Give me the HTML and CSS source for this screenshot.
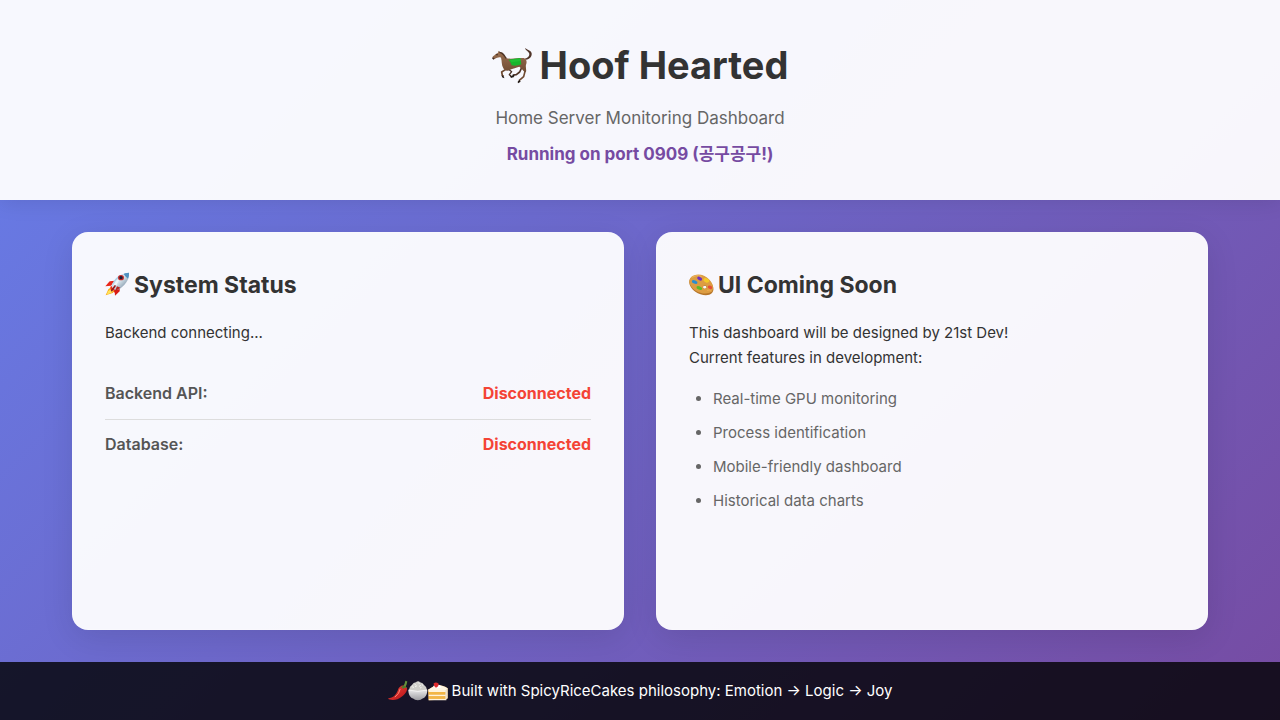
FILE: index.html
```html
<!DOCTYPE html>
<html lang="en">
<head>
<meta charset="utf-8">
<meta name="viewport" content="width=device-width, initial-scale=1">
<title>Hoof Hearted</title>
<link rel="stylesheet" href="styles.css">
</head>
<body>
<div class="app">
  <header class="header">
    <h1 class="title">
      <svg class="icon-title" viewBox="16 6 126 126" aria-hidden="true">
        <defs>
          <linearGradient id="coat" x1="0" y1="0" x2="0" y2="1"><stop offset="0" stop-color="#9c7152"/><stop offset="1" stop-color="#6f4c33"/></linearGradient>
        </defs>
        <path d="M117 53C130 53 136 43 135 34C133 25 125 25 115 18C117 27 129 29 128 37C128 43 123 48 114 50Z" fill="#50352a"/>
        <path d="M61 80L45 90L47 100L51 103" fill="none" stroke="#6d4930" stroke-width="5" stroke-linejoin="round"/>
        <path d="M66 82L75 89L68 98L75 104" fill="none" stroke="#493025" stroke-width="4" stroke-linejoin="round"/>
        <path d="M105 77L99 90L89 98L80 99" fill="none" stroke="#4e3325" stroke-width="5" stroke-linejoin="round"/>
        <path d="M108 72L115 88L111 104L97 116" fill="none" stroke="#704b31" stroke-width="5" stroke-linejoin="round"/>
        <path d="M36 27L39 30C48 31 52 42 59 49C73 52 94 48 111 48C121 51 121 61 118 68C116 76 121 86 117 91C109 87 106 79 98 74C87 77 80 80 74 82C64 88 55 88 50 79C44 69 46 57 43 47C38 44 31 47 24 51C18 54 16 48 19 43C24 39 29 34 34 32Z" fill="url(#coat)"/>
        <path d="M35 26L40 30C49 29 55 40 61 49L57 50C51 42 46 35 39 33Z" fill="#4d3425"/>
        <path d="M66 53Q84 50 101 48L104 67Q90 73 75 70Q72 60 66 53Z" fill="#18b52d"/>
        <path d="M68 54L101 50L102 57L75 61Z" fill="#24c83a" opacity=".6"/>
        <path d="M45 99L52 104L53 109L46 106ZM71 100L78 104L76 108L71 106ZM79 96L84 101L79 107L76 103ZM98 113L102 119L94 124L93 119Z" fill="#201914"/>
        <circle cx="31" cy="38" r="2" fill="#16110e"/>
        <path d="M18 46L23 49L21 53L17 50Z" fill="#3e2b24"/>
      </svg>
      Hoof Hearted
    </h1>
    <p class="subtitle">Home Server Monitoring Dashboard</p>
    <p class="port">Running on port 0909 (공구공구!)</p>
  </header>

  <main class="main">
    <section class="card">
      <h2 class="card-title">
        <svg class="icon-card" viewBox="14 8 75 78" aria-hidden="true">
          <defs>
            <linearGradient id="hull" x1="0" y1="0" x2="1" y2="1"><stop offset="0" stop-color="#3c92cf"/><stop offset=".45" stop-color="#dce9f0"/><stop offset="1" stop-color="#526b84"/></linearGradient>
          </defs>
          <path d="M34 52L24 60L16 78L37 71L46 62Z" fill="#f9a91b"/>
          <path d="M35 56L23 66L19 76L33 70L42 62Z" fill="#ffe45b"/>
          <path d="M43 34L28 36L15 51L32 49Z" fill="#e9271b"/>
          <path d="M58 54L58 66L44 79L43 62Z" fill="#d91c16"/>
          <path d="M30 52L39 47L49 60L42 71L39 62L31 62Z" fill="#e92b16"/>
          <path d="M34 49C40 29 56 12 86 10C88 29 73 52 51 62C43 63 34 56 34 49Z" fill="url(#hull)"/>
          <path d="M74 12L86 10Q87 21 83 28Q74 22 70 14Z" fill="#4f91c1"/>
          <path d="M39 48Q47 30 66 18Q53 35 46 52Z" fill="#fff" opacity=".65"/>
          <path d="M60 55L43 67L50 51Z" fill="#bb2520"/>
          <ellipse cx="62" cy="25" rx="9" ry="8" fill="#c82d2b"/>
          <ellipse cx="62" cy="25" rx="5" ry="5" fill="#201f35"/>
          <path d="M44 50L34 64" stroke="#951b1b" stroke-width="5" stroke-linecap="round"/>
        </svg>
        System Status
      </h2>
      <p class="card-text">Backend connecting...</p>
      <dl class="status-list">
        <div class="status-row"><dt class="status-name">Backend API:</dt><dd class="status-value">Disconnected</dd></div>
        <div class="status-row"><dt class="status-name">Database:</dt><dd class="status-value">Disconnected</dd></div>
      </dl>
    </section>

    <section class="card">
      <h2 class="card-title">
        <svg class="icon-card" viewBox="14 12 75 78" aria-hidden="true">
          <path fill-rule="evenodd" d="M29 24C43 17 62 23 74 36C86 48 92 65 83 75C72 86 49 82 33 71C20 62 10 45 17 33C20 28 24 26 29 24ZM60 54C55 54 55 61 60 62C65 63 68 59 66 56C65 53 62 53 60 54Z" fill="#b67529"/>
          <path d="M30 22C44 16 62 22 74 34C84 44 91 59 83 70C71 81 49 77 34 68C20 59 11 43 17 32C20 27 24 24 30 22ZM59 53C54 53 54 61 60 62C65 63 69 59 67 55C65 52 62 51 59 53Z" fill="#dd9d42" fill-rule="evenodd"/>
          <path d="M22 28Q36 19 52 25" fill="none" stroke="#f3c36c" stroke-width="2"/>
          <ellipse cx="31" cy="42" rx="9" ry="5" transform="rotate(22 31 42)" fill="#288dd3"/>
          <ellipse cx="46" cy="32" rx="8" ry="5" transform="rotate(30 46 32)" fill="#7130be"/>
          <ellipse cx="66" cy="37" rx="9" ry="6" transform="rotate(25 66 37)" fill="#f3c928"/>
          <ellipse cx="45" cy="60" rx="9" ry="5" transform="rotate(20 45 60)" fill="#5dbb28"/>
          <ellipse cx="77" cy="58" rx="7" ry="5" transform="rotate(25 77 58)" fill="#e64e35"/>
          <path d="M68 67Q77 64 81 70" fill="none" stroke="#efac50" stroke-width="3"/>
        </svg>
        UI Coming Soon
      </h2>
      <p class="card-text">This dashboard will be designed by 21st Dev!<br>Current features in development:</p>
      <ul class="features">
        <li class="feature">Real-time GPU monitoring</li>
        <li class="feature">Process identification</li>
        <li class="feature">Mobile-friendly dashboard</li>
        <li class="feature">Historical data charts</li>
      </ul>
    </section>
  </main>

  <footer class="footer">
    <svg class="icon-footer" viewBox="12 14 183 63" aria-hidden="true">
      <defs>
        <linearGradient id="chili" x1="0" y1="0" x2="1" y2="1"><stop offset="0" stop-color="#f34a3c"/><stop offset="1" stop-color="#b40f18"/></linearGradient>
        <linearGradient id="bowl" x1="0" y1="0" x2="0" y2="1"><stop offset="0" stop-color="#ececec"/><stop offset="1" stop-color="#9d9da2"/></linearGradient>
      </defs>
      <path d="M59 32Q63 26 65 16L71 18Q69 29 65 35Z" fill="#64913a"/>
      <path d="M49 34C55 27 67 31 70 39C72 50 57 66 41 72C30 76 16 75 12 70C29 68 37 58 42 45Q44 36 49 34Z" fill="url(#chili)"/>
      <path d="M50 36L58 31Q66 30 70 38L62 37L58 42L56 36Z" fill="#4c7e2c"/>
      <path d="M49 42Q47 55 34 65" fill="none" stroke="#ff8775" stroke-width="3" stroke-linecap="round"/>
      <path d="M76 43Q78 33 85 29Q89 20 97 20Q104 14 110 20Q119 21 122 29Q130 34 131 44L120 52H86Z" fill="#cfceca"/>
      <path d="M84 34l4-3m5-5l4 3m7-8l4 4m-13 9l5-3m7 2l5-3m3-3l4 3m-9 8l4-2m-27 1l4-2" fill="none" stroke="#fafaf6" stroke-width="3"/>
      <path d="M74 43Q103 51 132 43C132 58 126 67 116 71Q114 75 103 75Q92 75 90 71C80 67 74 58 74 43Z" fill="url(#bowl)"/>
      <path d="M75 44Q103 52 131 44" fill="none" stroke="#fff" stroke-width="2"/>
      <path d="M134 43L158 29Q178 29 194 39V69L188 73L136 75Z" fill="#e7ae55"/>
      <path d="M134 43L158 29Q178 29 194 39L190 45H134Z" fill="#fff5e2"/>
      <path d="M136 44H190V50H136ZM136 58H190V63H136ZM136 71H190V75H136Z" fill="#fff3dc"/>
      <path d="M136 50H188V58H136ZM136 63H188V71H136Z" fill="#f3b645"/>
      <path d="M187 45L194 39V69L187 74Z" fill="#efe1cb"/>
      <path d="M151 31Q158 24 170 29L176 35Q163 43 151 35Z" fill="#fff"/>
      <path d="M151 24Q158 18 166 24Q168 33 158 37Q151 32 151 24Z" fill="#df2b2d"/>
    </svg>
    <p class="footer-text">Built with SpicyRiceCakes philosophy: Emotion → Logic → Joy</p>
  </footer>
</div>
</body>
</html>
```
FILE: styles.css
```css
* { box-sizing: border-box; margin: 0; padding: 0; }

body {
  font-family: Inter, "Noto Sans CJK KR", sans-serif;
  font-size: 15px;
  line-height: 26px;
  color: #333;
}

.app {
  display: flex;
  flex-direction: column;
  min-height: 100vh;
  background: linear-gradient(135deg, #667eea 0%, #764ba2 100%);
}

.header {
  padding: 32px;
  text-align: center;
  background: rgba(255, 255, 255, 0.95);
  box-shadow: 0 2px 20px rgba(0, 0, 0, 0.1);
}

.title {
  display: flex;
  align-items: center;
  justify-content: center;
  gap: 6px;
  margin-bottom: 6px;
  font-size: 38px;
  line-height: 66px;
}

.icon-title { width: 42px; height: 42px; }

.subtitle {
  margin-bottom: 8px;
  font-size: 17px;
  line-height: 28px;
  color: #666;
}

.port {
  font-size: 17px;
  font-weight: 700;
  line-height: 28px;
  color: #764ba2;
}

.main {
  display: grid;
  flex: 1;
  grid-template-columns: repeat(auto-fit, minmax(300px, 1fr));
  gap: 32px;
  width: 100%;
  max-width: 1200px;
  margin: 0 auto;
  padding: 32px;
}

.card {
  padding: 32px;
  background: rgba(255, 255, 255, 0.95);
  border: 1px solid rgba(255, 255, 255, 0.2);
  border-radius: 16px;
  box-shadow: 0 8px 32px rgba(0, 0, 0, 0.1);
}

.card-title {
  display: flex;
  align-items: center;
  gap: 4px;
  margin-bottom: 15px;
  font-size: 23px;
  line-height: 40px;
}

.icon-card { width: 25px; height: 26px; }

.card-text { line-height: 25px; }

.status-list { margin-top: 24px; font-size: 16px; }

.status-row {
  display: flex;
  align-items: center;
  justify-content: space-between;
  padding: 11px 0 13px;
  border-bottom: 1px solid #ddd;
}

.status-row:last-child { border-bottom: 0; }

.status-name { font-weight: 600; color: #555; }

.status-value { font-weight: 700; color: #f44336; }

.features {
  margin-top: 16px;
  padding-left: 24px;
  color: #666;
}

.feature { margin-bottom: 8px; }

.footer {
  display: flex;
  align-items: center;
  justify-content: center;
  gap: 4px;
  padding: 16px;
  color: #fff;
  background: rgba(0, 0, 0, 0.8);
}

.icon-footer { width: 60px; height: 21px; margin-bottom: 2px; }
```
